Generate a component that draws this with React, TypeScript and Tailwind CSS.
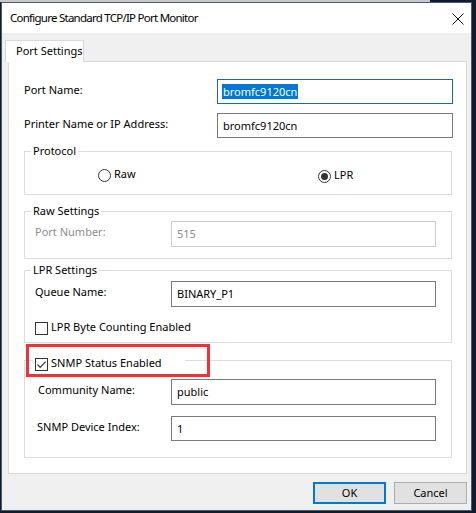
import type { ReactNode } from "react";

function Label({ children, className = "" }: { children: ReactNode; className?: string }) {
  return <span className={`mb-[4px] ${className}`}>{children}</span>;
}

function Radio({ checked }: { checked?: boolean }) {
  return (
    <span className="flex h-[13px] w-[13px] items-center justify-center rounded-full border border-[#333333] bg-white">
      {checked && <span className="h-[7px] w-[7px] rounded-full bg-[#333333]" />}
    </span>
  );
}

function Check({ checked }: { checked?: boolean }) {
  return (
    <span className="flex h-[13px] w-[13px] items-center justify-center border border-[#333333] bg-white">
      {checked && (
        <svg width="11" height="11" viewBox="0 0 11 11">
          <path d="M1.5 5.5 L4.2 8.3 L9.6 2.6" fill="none" stroke="#333333" strokeWidth="1.2" />
        </svg>
      )}
    </span>
  );
}

export default function App() {
  return (
    <div className="h-[513px] w-[476px] overflow-hidden bg-[#0f1c2e] font-['Noto_Sans',sans-serif] text-[11px] leading-[16px] text-black">
      <div className="h-[2px] w-[430px] bg-[#c9c9c9]" />

      <div className="ml-[1px] flex h-[509px] w-[471px] flex-col border border-[#4e5a68] bg-[#f0f0f0]">
        {/* title bar */}
        <div className="flex h-[30px] items-center justify-between bg-white pl-[8px] pr-[7px]">
          <span className="mt-[-1px] text-[11.5px] tracking-[-0.75px]">Configure Standard TCP/IP Port Monitor</span>
          <svg width="12" height="12" viewBox="0 0 12 12" className="mt-[1px]">
            <path d="M0.5 0.5 L11.5 11.5 M11.5 0.5 L0.5 11.5" stroke="#111111" strokeWidth="1" />
          </svg>
        </div>

        {/* tab */}
        <div className="relative z-10 -mb-px ml-[3px] mt-[7px] flex h-[22px] w-[79px] items-center border border-b-0 border-[#d9d9d9] bg-white pl-[10px]">
          <span className="mt-[-2px]">Port Settings</span>
        </div>

        {/* tab page */}
        <div className="relative ml-[6px] flex h-[413px] w-[459px] flex-col border border-[#d9d9d9] bg-white pl-[15px] pt-[17px]">
          <div className="flex h-[25px] items-center">
            <Label className="w-[193px]">Port Name:</Label>
            <div className="flex h-[25px] w-[236px] items-center border border-[#1f6c9c] pl-[4px]">
              <span className="bg-[#0078d7] px-px leading-[15px] text-white">bromfc9120cn</span>
            </div>
          </div>

          <div className="mt-[9px] flex h-[25px] items-center">
            <Label className="w-[193px]">Printer Name or IP Address:</Label>
            <div className="flex h-[25px] w-[236px] items-center border border-[#7a7a7a] pl-[5px]">bromfc9120cn</div>
          </div>

          {/* protocol */}
          <fieldset className="mt-[5px] h-[52px] w-[428px] border border-[#dcdcdc]">
            <legend className="ml-[6px] px-[2px]">Protocol</legend>
            <div className="mt-[8px] flex items-center pl-[73px]">
              <div className="flex w-[220px] items-center gap-[3px]">
                <Radio />
                <span className="mt-[-2px]">Raw</span>
              </div>
              <div className="mt-[2px] flex items-center gap-[3px]">
                <Radio checked />
                <span className="mt-[-2px]">LPR</span>
              </div>
            </div>
          </fieldset>

          {/* raw settings */}
          <fieldset className="mt-[8px] h-[56px] w-[428px] border border-[#dcdcdc]">
            <legend className="ml-[6px] px-[2px]">Raw Settings</legend>
            <div className="mt-[2px] flex items-center pl-[10px]">
              <Label className="w-[136px] text-[#8d8d8d]">Port Number:</Label>
              <div className="flex h-[26px] w-[265px] items-center border border-[#cccccc] pl-[5px] text-[#8d8d8d]">515</div>
            </div>
          </fieldset>

          {/* lpr settings */}
          <fieldset className="mt-[3px] h-[81px] w-[428px] border border-[#dcdcdc]">
            <legend className="ml-[6px] px-[2px]">LPR Settings</legend>
            <div className="mt-[3px] flex items-center pl-[10px]">
              <Label className="w-[136px]">Queue Name:</Label>
              <div className="flex h-[26px] w-[265px] items-center border border-[#7a7a7a] pl-[5px]">BINARY_P1</div>
            </div>
            <div className="mt-[14px] flex items-center gap-[3px] pl-[10px]">
              <Check />
              <span className="mt-[-2px]">LPR Byte Counting Enabled</span>
            </div>
          </fieldset>

          {/* snmp */}
          <fieldset className="mt-[6px] h-[109px] w-[428px] border border-[#dcdcdc]">
            <legend className="ml-[8px] h-[22px] w-[152px] pl-[2px] pt-[8px]">
              <div className="flex items-center gap-[3px]">
                <Check checked />
                <span className="mt-[-2px]">SNMP Status Enabled</span>
              </div>
            </legend>
            <div className="mt-[8px] flex items-center pl-[13px]">
              <Label className="w-[133px]">Community Name:</Label>
              <div className="flex h-[26px] w-[265px] items-center border border-[#7a7a7a] pl-[5px]">public</div>
            </div>
            <div className="mt-[11px] flex items-center pl-[12px]">
              <Label className="w-[134px]">SNMP Device Index:</Label>
              <div className="flex h-[25px] w-[265px] items-center border border-[#7a7a7a] pl-[5px]">1</div>
            </div>
          </fieldset>

          {/* annotation box */}
          <div className="absolute left-[17px] top-[282px] h-[33px] w-[184px] border-[3px] border-[#ee3338]" />
        </div>

        {/* buttons */}
        <div className="mt-[8px] flex justify-end gap-[8px] pr-[4px]">
          <button className="flex h-[22px] w-[73px] items-center justify-center border-2 border-[#0078d7] bg-[#e1e1e1]">
            <span className="mt-[-1px]">OK</span>
          </button>
          <button className="flex h-[22px] w-[73px] items-center justify-center border border-[#adadad] bg-[#e1e1e1]">
            <span className="mt-[-1px]">Cancel</span>
          </button>
        </div>
      </div>
    </div>
  );
}
